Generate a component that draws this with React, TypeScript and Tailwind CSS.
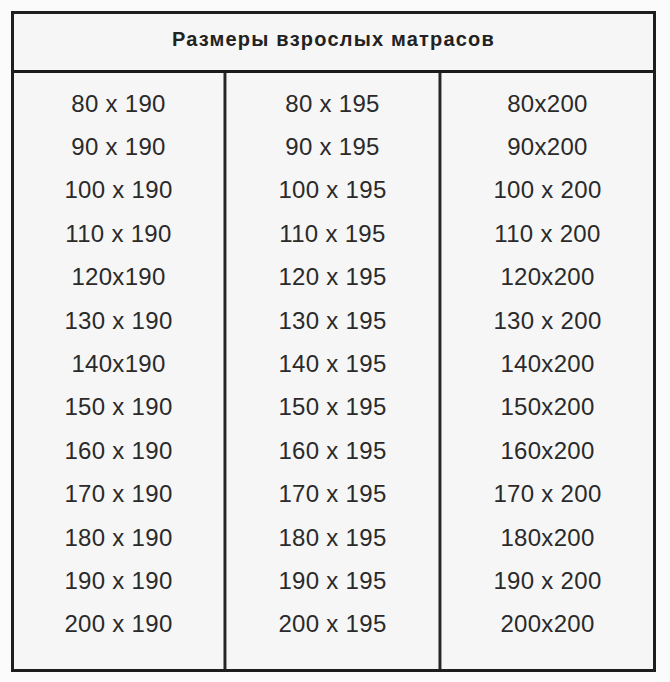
const rows: [string, string, string][] = [
  ["80 x 190", "80 x 195", "80x200"],
  ["90 x 190", "90 x 195", "90x200"],
  ["100 x 190", "100 x 195", "100 x 200"],
  ["110 x 190", "110 x 195", "110 x 200"],
  ["120x190", "120 x 195", "120x200"],
  ["130 x 190", "130 x 195", "130 x 200"],
  ["140x190", "140 x 195", "140x200"],
  ["150 x 190", "150 x 195", "150x200"],
  ["160 x 190", "160 x 195", "160x200"],
  ["170 x 190", "170 x 195", "170 x 200"],
  ["180 x 190", "180 x 195", "180x200"],
  ["190 x 190", "190 x 195", "190 x 200"],
  ["200 x 190", "200 x 195", "200x200"],
];

function Column({ items, width }: { items: string[]; width: string }) {
  return (
    <div className={`${width} flex flex-col pt-[9px]`}>
      {items.map((t, i) => (
        <div
          key={i}
          className="flex h-[43.4px] items-center justify-center text-[24px] tracking-[0.3px] text-[#2a2a2a]"
        >
          {t}
        </div>
      ))}
    </div>
  );
}

function Divider() {
  return (
    <div className="flex w-[4px] shrink-0">
      <div className="w-px bg-[#8c8c8c]" />
      <div className="w-[2px] bg-[#262626]" />
      <div className="w-px bg-[#9a9a9a]" />
    </div>
  );
}

export default function App() {
  return (
    <div
      className="h-[682px] w-[670px] bg-[#fbfbfb] pl-[11px] pt-[11px]"
      style={{ fontFamily: '"Liberation Sans", Arial, sans-serif' }}
    >
      <div className="flex h-[661px] w-[645px] flex-col border-[3px] border-[#1e1e1e] bg-[#f6f6f6]">
        <div className="flex h-[56px] items-center justify-center pb-[6px] text-[20px] font-bold tracking-[1.2px] text-[#222]">
          Размеры взрослых матрасов
        </div>
        <div className="h-[3px] bg-[#1a1a1a]" />
        <div className="flex flex-1">
          <Column items={rows.map((r) => r[0])} width="w-[209px]" />
          <Divider />
          <Column items={rows.map((r) => r[1])} width="w-[211px]" />
          <Divider />
          <Column items={rows.map((r) => r[2])} width="w-[211px]" />
        </div>
      </div>
    </div>
  );
}
